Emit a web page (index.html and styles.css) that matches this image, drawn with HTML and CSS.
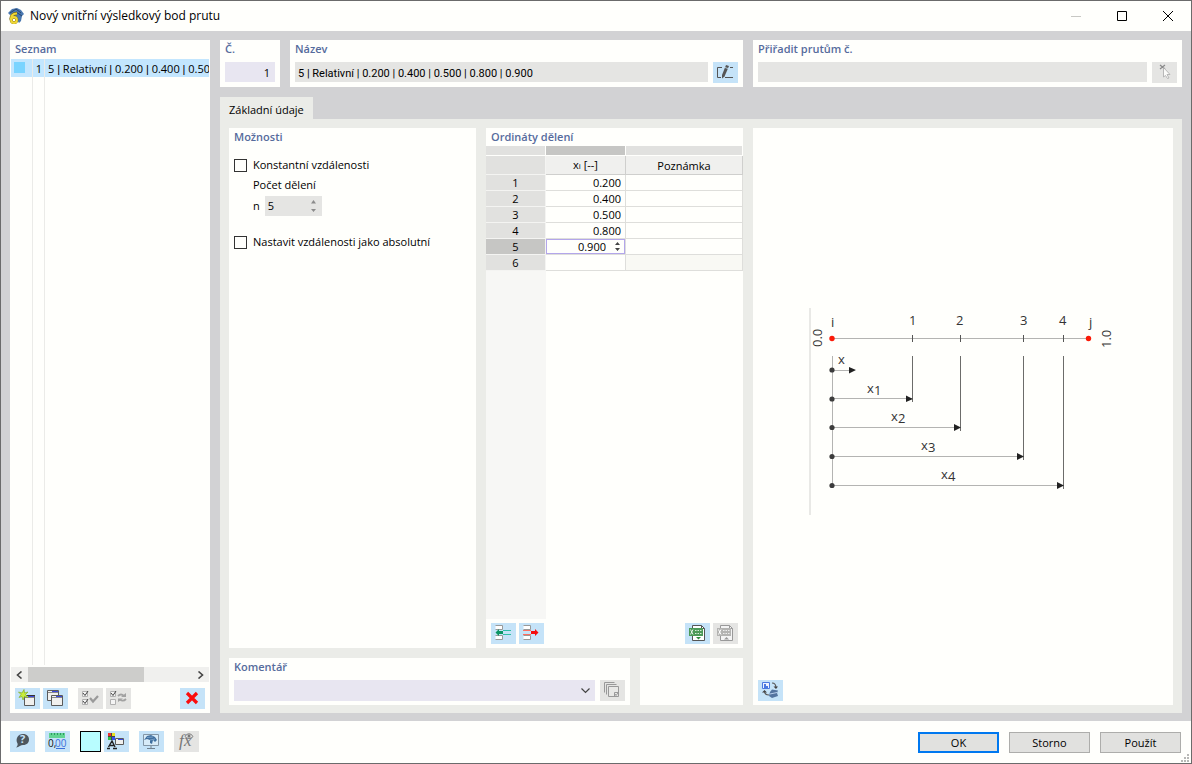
FILE: index.html
```html
<!DOCTYPE html>
<html lang="cs">
<head>
<meta charset="utf-8">
<title>Nový vnitřní výsledkový bod prutu</title>
<link rel="stylesheet" href="styles.css">
</head>
<body>
<div class="window">
  <header class="titlebar">
    <svg class="app-icon" width="16" height="16" viewBox="0 0 16 16" aria-hidden="true">
      <path d="M0 5 4 1 9 0 13 2 16 6 14 8 13 13 11 15 5 6 2 7Z" fill="#4a78b0"/>
      <path d="M2 5 8 1 13 5M8 4 14 8" fill="none" stroke="#27456b" stroke-width="1"/>
      <path d="M9 5.500C5 5.500 3 8 3 11.500" fill="none" stroke="#7d6c14" stroke-width="3.600"/>
      <circle cx="6" cy="12" r="2.800" fill="#fff" stroke="#7d6c14" stroke-width="3"/>
      <path d="M9 5.500C5 5.500 3 8 3 11.500" fill="none" stroke="#f0d836" stroke-width="2.200"/>
      <circle cx="6" cy="12" r="2.800" fill="none" stroke="#f0d836" stroke-width="2.200"/>
    </svg>
    <h1 class="title">Nový vnitřní výsledkový bod prutu</h1>
    <div class="caption-buttons">
      <button class="caption" disabled aria-label="Minimalizovat"><svg width="10" height="10" viewBox="0 0 10 10"><path d="M0 5.500H10" stroke="#c8c8c4" fill="none"/></svg></button>
      <button class="caption" aria-label="Maximalizovat"><svg width="10" height="10" viewBox="0 0 10 10"><path d="M.500.500H9.500V9.500H.500Z" stroke="#000" fill="none"/></svg></button>
      <button class="caption" aria-label="Zavřít"><svg width="10" height="10" viewBox="0 0 10 10"><path d="M0 0 10 10M10 0 0 10" stroke="#000" fill="none"/></svg></button>
    </div>
  </header>

  <main class="body">
    <aside class="panel sidebar">
      <h2 class="label">Seznam</h2>
      <div class="list">
        <div class="list-row selected">
          <span class="cell"><i class="swatch"></i></span><span class="cell num">1</span><span class="cell name">5 <span class="bar">|</span> Relativní <span class="bar">|</span> 0.200 <span class="bar">|</span> 0.400 <span class="bar">|</span> 0.50</span>
        </div>
        <div class="list-row filler"><span class="cell"></span><span class="cell"></span><span class="cell"></span></div>
      </div>
      <div class="scrollbar">
        <button class="arrow" aria-label="Doleva"><svg width="7" height="8" viewBox="0 0 7 8"><path d="M5.500 .500 1.500 4 5.500 7.500" fill="none" stroke="#444" stroke-width="1.600"/></svg></button>
        <div class="track"><div class="thumb"></div></div>
        <button class="arrow" aria-label="Doprava"><svg width="7" height="8" viewBox="0 0 7 8"><path d="M1.500 .500 5.500 4 1.500 7.500" fill="none" stroke="#444" stroke-width="1.600"/></svg></button>
      </div>
      <div class="tools list-tools">
        <button class="tool" aria-label="Nový"><svg width="25" height="21" viewBox="0 0 25 21"><path d="M9.500 7.500H19.500V17.500H9.500Z" fill="#f0f0ee" stroke="#5a5a5a"/><path d="M9 7H20V8H9Z" fill="#333"/><path d="M13 8H19V9H13Z" fill="#3c48e0"/><path d="M10 9.500H19" stroke="#888"/><path d="M9 1.500 9.500 5 13 4 10.500 6.500 13 9.500 9.500 8.500 8 12 7 8.500 4 9.500 6 6.500 3.500 4 7 5Z" fill="#c9ee3c" stroke="#7fae2a" stroke-width=".700"/></svg></button>
        <button class="tool" aria-label="Kopírovat"><svg width="25" height="21" viewBox="0 0 25 21"><path d="M4.500 2.500H15.500V12.500H4.500Z" fill="#f0f0ee" stroke="#5a5a5a"/><path d="M9 3H15V4H9Z" fill="#3c48e0"/><path d="M5 4.500H15" stroke="#888"/><path d="M8.500 7.500H19.500V17.500H8.500Z" fill="#f0f0ee" stroke="#5a5a5a"/><path d="M13 8H19V9H13Z" fill="#3c48e0"/><path d="M9 9.500H19" stroke="#888"/></svg></button>
        <button class="tool off second" disabled aria-label="Vybrat vše"><svg width="25" height="21" viewBox="0 0 25 21"><path d="M4.500 3.500H9.500V8.500H4.500ZM4.500 11.500H9.500V16.500H4.500Z" fill="#f4f4f4" stroke="#b0b0b0"/><path d="M5 5 7 7.500 10 3M5 13 7 15.500 10 11" fill="none" stroke="#444"/><path d="M12 10 15 13.500 20 8" fill="none" stroke="#9a9a9a" stroke-width="2.200"/></svg></button>
        <button class="tool off" disabled aria-label="Obrátit výběr"><svg width="25" height="21" viewBox="0 0 25 21"><path d="M4.500 3.500H9.500V8.500H4.500ZM4.500 11.500H9.500V16.500H4.500Z" fill="#f4f4f4" stroke="#b0b0b0"/><path d="M5 5 7 7.500 10 3" fill="none" stroke="#444"/><path d="M12 8C14 6 16 6 18 8M20 11C18 13 16 13 14 11.500" fill="none" stroke="#a2a2a2" stroke-width="1.800"/><path d="M15 9H20V5ZM17 10.500H12V14Z" fill="#a2a2a2"/></svg></button>
        <button class="tool last" aria-label="Odstranit"><svg width="25" height="21" viewBox="0 0 25 21"><path d="M7 5 17 15M17 5 7 15" fill="none" stroke="#fb0d0d" stroke-width="3.200"/></svg></button>
      </div>
    </aside>

    <div class="content">
      <div class="head">
        <section class="panel field">
          <label class="label" for="no">Č.</label>
          <input class="input lilac right" id="no" value="1">
        </section>
        <section class="panel field">
          <label class="label" for="name">Název</label>
          <div class="line">
            <input class="input entry-name" id="name" value="5 | Relativní | 0.200 | 0.400 | 0.500 | 0.800 | 0.900">
            <button class="tool" aria-label="Upravit název"><svg width="25" height="21" viewBox="0 0 25 21"><path d="M9 5.500H4.500V15.500H8M12 15.500H20M17 5.500H20" fill="none" stroke="#555"/><path d="M13 3 16 4 11.500 14.500 9 16.500 9 13Z" fill="#555"/><path d="M12 5.500 15 6.500" stroke="#c5e3f8" stroke-width=".800"/></svg></button>
          </div>
        </section>
        <section class="panel field">
          <label class="label" for="assign">Přiřadit prutům č.</label>
          <div class="line">
            <input class="input" id="assign">
            <button class="tool off" disabled aria-label="Vybrat"><svg width="25" height="21" viewBox="0 0 25 21"><path d="M8 3 13 7M13 3 8 7" stroke="#888" stroke-width="1.200"/><path d="M11.500 5.500 18 12.500 15 12.500 17 16 15.500 16.500 13.500 13.500 11.500 15Z" fill="#fbfbf9" stroke="#aaa" stroke-width=".800"/></svg></button>
          </div>
        </section>
      </div>

      <div class="tabs" role="tablist"><button class="tab" role="tab" aria-selected="true">Základní údaje</button></div>

      <div class="page">
        <div class="left">
          <div class="upper">
            <section class="panel options">
              <h2 class="label">Možnosti</h2>
              <label class="check"><input type="checkbox">Konstantní vzdálenosti</label>
              <div class="count">
                <label for="count">Počet dělení</label>
                <div class="count-line"><span>n</span><span class="spin"><input id="count" value="5" disabled><svg width="5" height="12" viewBox="0 0 5 12"><path d="M0 3.500 2.500 0 5 3.500ZM0 9 2.500 12 5 9Z" fill="#8c8c8c"/></svg></span></div>
              </div>
              <label class="check"><input type="checkbox">Nastavit vzdálenosti jako absolutní</label>
            </section>

            <section class="panel ordinates">
              <h2 class="label">Ordináty dělení</h2>
              <table class="grid">
                <colgroup><col class="c-no"><col class="c-x"><col></colgroup>
                <thead>
                  <tr class="strip"><td></td><td class="on"></td><td></td></tr>
                  <tr class="heads"><th></th><th scope="col">x<span class="sub">i</span> [--]</th><th scope="col">Poznámka</th></tr>
                </thead>
                <tbody>
                  <tr><th scope="row">1</th><td>0.200</td><td></td></tr>
                  <tr><th scope="row">2</th><td>0.400</td><td></td></tr>
                  <tr><th scope="row">3</th><td>0.500</td><td></td></tr>
                  <tr><th scope="row">4</th><td>0.800</td><td></td></tr>
                  <tr class="current"><th scope="row">5</th><td><span class="editor"><input value="0.900" aria-label="x 5"><svg width="5" height="9" viewBox="0 0 5 9"><path d="M0 3 2.500 0 5 3ZM0 6 2.500 9 5 6Z" fill="#444"/></svg></span></td><td></td></tr>
                  <tr><th scope="row">6</th><td></td><td class="locked"></td></tr>
                </tbody>
              </table>
              <div class="gutter"></div>
              <div class="tools">
                <button class="tool" aria-label="Vložit řádek"><svg width="25" height="21" viewBox="0 0 25 21"><path d="M4.500 2.500H11.500V6.500H4.500M4.500 12.500H11.500V16.500H4.500" fill="#fff" stroke="#999"/><path d="M12 7.500H20M12 11.500H20" stroke="#2fbfa5"/><path d="M4.500 9.500 8 6V8H12V11H8V13Z" fill="#0d9564"/></svg></button>
                <button class="tool" aria-label="Odstranit řádek"><svg width="25" height="21" viewBox="0 0 25 21"><path d="M4.500 2.500H11.500V6.500H4.500M4.500 12.500H11.500V16.500H4.500" fill="#fff" stroke="#999"/><path d="M4 7.500H12M4 11.500H12" stroke="#ff6f61"/><path d="M19.500 9.500 16 6V8H12V11H16V13Z" fill="#f60c0c"/></svg></button>
                <button class="tool last" aria-label="Export do tabulky"><svg width="25" height="21" viewBox="0 0 25 21"><path d="M7.500 2.500H16.500L19.500 5.500V17.500H7.500Z" fill="#fff" stroke="#555"/><path d="M16.500 2.500V5.500H19.500" fill="none" stroke="#555"/><path d="M4 5H18V13H4Z" fill="#4c9a58"/><path d="M5.500 6.500 8 11.500M8 6.500 5.500 11.500" stroke="#e4f3e6"/><path d="M10 7.500H17M10 10.500H17" stroke="#d7ecd9" stroke-dasharray="1.500 1"/><path d="M11 14H16L13.500 16.500Z" fill="#2f8a3c"/></svg></button>
                <button class="tool off" disabled aria-label="Import z tabulky"><svg width="25" height="21" viewBox="0 0 25 21"><path d="M7.500 2.500H16.500L19.500 5.500V17.500H7.500Z" fill="#f4f4f4" stroke="#999"/><path d="M16.500 2.500V5.500H19.500" fill="none" stroke="#999"/><path d="M4 5H18V13H4Z" fill="#b4b4b2"/><path d="M5.500 6.500 8 11.500M8 6.500 5.500 11.500" stroke="#fff"/><path d="M10 7.500H17M10 10.500H17" stroke="#eee" stroke-dasharray="1.500 1"/><path d="M11 16.500H16L13.500 14Z" fill="#999"/></svg></button>
              </div>
            </section>
          </div>

          <div class="lower">
            <section class="panel field">
              <label class="label" for="comment">Komentář</label>
              <div class="line">
                <span class="combo"><select class="input lilac" id="comment"><option></option></select><svg width="9" height="6" viewBox="0 0 9 6"><path d="M.500.500 4.500 4.500 8.500.500" fill="none" stroke="#444" stroke-width="1.200"/></svg></span>
                <button class="tool off" disabled aria-label="Knihovna komentářů"><svg width="25" height="21" viewBox="0 0 25 21"><path d="M4.500 12.500V2.500H14.500M6.500 14.500V4.500H16.500" fill="none" stroke="#999"/><path d="M8.500 6.500H18.500V16.500H8.500Z" fill="#e8e8e6" stroke="#999"/><path d="M14.500 16.500V12.500H18.500M15 14 16 15.500 18 13" fill="none" stroke="#999"/></svg></button>
              </div>
            </section>
            <section class="panel"></section>
          </div>
        </div>

        <section class="panel preview">
          <div class="canvas">
            <svg class="diagram" width="309" height="208" viewBox="0 0 309 208" role="img" aria-label="Schéma dělení prutu">
              <path class="edge" d="M1 1V208"/>
              <path class="thin" d="M23 31.500H279M23.500 49V179M23 63.500H42M23 91.500H103M23 120.500H150M23 149.500H214M23 178.500H254"/>
              <path class="tick" d="M103.500 28V35M151.500 28V35M214.500 28V35M254.500 28V35"/>
              <path class="drop" d="M103.500 49V95M151.500 49V124M214.500 49V153M254.500 49V182"/>
              <g class="red"><circle cx="23" cy="31.500" r="2.700"/><circle cx="279.500" cy="31.500" r="2.700"/></g>
              <g class="dark"><circle cx="23" cy="63" r="2.600"/><circle cx="23" cy="92" r="2.600"/><circle cx="23" cy="120.500" r="2.600"/><circle cx="23" cy="149.500" r="2.600"/><circle cx="23" cy="178.500" r="2.600"/></g>
              <path class="heads-fill" d="M40 60 47 63 40 66.500ZM97 88.500 104 92 97 95ZM145 117 152 120.500 145 124ZM208 146 215 149.500 208 153ZM248 175 255 178.500 248 182Z"/>
              <g class="txt">
                <text x="22" y="20">i</text><text x="100" y="18">1</text><text x="147" y="18">2</text><text x="211" y="18">3</text><text x="250" y="18">4</text><text x="280" y="20">j</text>
                <text transform="translate(13 40) rotate(-90)">0.0</text><text transform="translate(302 41) rotate(-90)">1.0</text>
                <text x="29" y="57">x</text><text x="58" y="86">x</text><text x="65" y="88">1</text><text x="82" y="114">x</text><text x="89" y="116">2</text><text x="112" y="143">x</text><text x="119" y="145">3</text><text x="132" y="172">x</text><text x="139" y="174">4</text>
              </g>
            </svg>
          </div>
          <div class="tools">
            <button class="tool" aria-label="Přepnout obrázek"><svg width="25" height="21" viewBox="0 0 25 21"><path d="M4.500 2.500H11.500V8.500H4.500Z" fill="#eef3ff" stroke="#4a7ae0"/><path d="M6 4H8V6H10V8H6Z" fill="#4a7ae0"/><path d="M14 3C17 3 18 5 18 8M11 15C8 15 6.500 14 6.500 11" fill="none" stroke="#555" stroke-width="1.200"/><path d="M15.500 6.500H20L18 9ZM4 12.500H9L6.500 10Z" fill="#444"/><path d="M12 12 14 9.500 20 10.500 19 13 20 16 14 18 11 16Z" fill="#54749f"/><path d="M12 14 19 12.500" stroke="#b9cfec"/></svg></button>
          </div>
        </section>
      </div>
    </div>
  </main>

  <footer class="footer">
    <div class="tools foot-tools">
      <button class="tool" aria-label="Nápověda"><svg width="25" height="21" viewBox="0 0 25 21"><path d="M13 3C17 3 19 5.500 19 8.500S17 14 13 14C11 14 9 16 6 16.500C7.500 15 8 13.500 7.500 12.500C5 8 8 3 13 3Z" fill="#4d565e"/><text class="q" x="10" y="12">?</text></svg></button>
      <button class="tool" aria-label="Jednotky"><svg width="25" height="21" viewBox="0 0 25 21"><path d="M4 2H20V7H4Z" fill="#62d493"/><path d="M6.500 2V4M9.500 2V4M12.500 2V4M15.500 2V4M18.500 2V4" stroke="#2c9a62"/><text class="zero" x="3" y="16">0,</text><text class="zero blue" x="10" y="16">00</text><path d="M11 17.500H20" stroke="#3b70d8"/></svg></button>
      <button class="color" aria-label="Barva"></button>
      <button class="tool tight" aria-label="Zobrazení"><svg width="25" height="21" viewBox="0 0 25 21"><path d="M4 2H11V9H4Z" fill="#444"/><path d="M4 2H7V5H4Z" fill="#f03030"/><path d="M8 2H11V5H8Z" fill="#e8e020"/><path d="M4 6H7V9H4Z" fill="#30c040"/><path d="M8 6H11V9H8Z" fill="#3450f0"/><path d="M4.500 16 8 10 11 16M5 14.500H10M3 17.500H6M9 17.500H13" fill="none" stroke="#222" stroke-width="1.400"/><path d="M11.500 7.500H19.500V13.500H11.500Z" fill="#f0f0ee" stroke="#5a5a5a"/><path d="M14 8H19V9H14Z" fill="#3c48e0"/></svg></button>
      <button class="tool" aria-label="Náhled"><svg width="25" height="21" viewBox="0 0 25 21"><path d="M4.500 3.500H19.500V14.500H4.500Z" fill="#d7ebf8" stroke="#8396a6"/><path d="M5 9 8 5 12 4 16 6 18 9 16 11 14 9 13 13 11 12 11 9 8 8Z" fill="#3f6f9f"/><path d="M8 6.500 14 6M11 9 16 8" stroke="#86acd0" stroke-width=".800"/><path d="M12 15V17M8 17.500H16" stroke="#70808e"/></svg></button>
      <button class="tool off" disabled aria-label="Vzorce"><svg width="25" height="21" viewBox="0 0 25 21"><text class="fx" x="5" y="15">f</text><text class="fx" x="10" y="15">x</text><path d="M11 5.500C13 2 17 2 19 5.500C17 8 13 8 11 5.500Z" fill="#e5e5e3" stroke="#777"/><circle cx="15" cy="5" r="1.500" fill="#777"/></svg></button>
    </div>
    <div class="dialog-buttons">
      <button class="btn primary">OK</button><button class="btn">Storno</button><button class="btn">Použít</button>
    </div>
    <svg class="grip" width="8" height="8" viewBox="0 0 8 8" aria-hidden="true"><path d="M6 0H8V2H6ZM3 3H5V5H3ZM6 3H8V5H6ZM0 6H2V8H0ZM3 6H5V8H3ZM6 6H8V8H6Z" fill="#b8b8b6"/></svg>
  </footer>
</div>
</body>
</html>
```
FILE: styles.css
```css
* { box-sizing: border-box; }

:root {
  --paper: #fffffc;
  --frame: #d2d2d4;
  --page: #ebece8;
  --field: #e5e5e3;
  --lilac: #e8e6f1;
  --blue: #c5e3f8;
  --heading: #566b9c;
}

body {
  margin: 0;
  font: 11px/16px "Open Sans", "Noto Sans", sans-serif;
  color: #000;
}

button, input, select { font: inherit; color: inherit; margin: 0; padding: 0; border: 0; border-radius: 0; }
h1, h2 { margin: 0; font-weight: 400; }
svg { display: block; flex: none; }

.window {
  display: flex;
  flex-direction: column;
  height: 100vh;
  min-height: 500px;
  border: 1px solid #6b6b6b;
  background: var(--paper);
}

.titlebar { display: flex; align-items: center; height: 30px; padding-left: 7px; gap: 6px; }
.title { flex: 1; font-size: 12px; }
.caption-buttons { display: flex; }
.caption { display: grid; place-items: center; width: 46px; height: 29px; background: none; }

.body { flex: 1; min-height: 0; display: flex; gap: 10px; padding: 9px 9px 8px; background: var(--frame); }
.panel { background: var(--paper); min-width: 0; }
.label { display: block; padding-left: 5px; line-height: 18px; font-size: 11px; font-weight: 600; color: var(--heading); }

.sidebar { width: 200px; display: flex; flex-direction: column; padding-bottom: 4px; }
.sidebar .label { height: 19px; }
.list { flex: 1; display: flex; flex-direction: column; margin: 0 1px; min-height: 0; }
.list-row { display: grid; grid-template-columns: 22px 12px 1fr; height: 18px; }
.list-row.filler { flex: 1; }
.list-row.selected { background: #c3e6fe; }
.cell { border-right: 1px solid #ebebe8; line-height: 20px; white-space: nowrap; overflow: hidden; }
.cell:last-child { border-right: 0; }
.num { text-align: right; padding-right: 2px; }
.name { padding-left: 3px; }
.bar { font-family: "Liberation Sans", sans-serif; }
.swatch { display: block; width: 11px; height: 11px; margin: 3px; background: #7ad4ff; }

.scrollbar { display: flex; height: 15px; margin: 2px 1px 6px; background: #f0f0ee; }
.arrow { display: grid; place-items: center; width: 17px; background: none; }
.track { flex: 1; }
.thumb { width: 71%; height: 100%; background: #cdcdcb; }

.tools { display: flex; gap: 3px; padding: 0 5px; }
.tool { flex: none; width: 25px; height: 21px; background: var(--blue); }
.tool.off { background: var(--field); }
.tool.second { margin-left: 7px; }
.tool.last { margin-left: auto; }

.content { flex: 1; min-width: 0; display: flex; flex-direction: column; }
.head { display: grid; grid-template-columns: 60px 453fr 429fr; gap: 10px; margin-bottom: 10px; }
.field { padding-bottom: 4px; }
.field .label { margin-bottom: 4px; }
.field > .input { display: block; width: calc(100% - 10px); margin: 0 5px; }
.line { display: flex; gap: 5px; padding: 0 5px; }
.input { flex: 1; min-width: 0; height: 20px; padding: 0 3px; background: var(--field); }
.entry-name { font-family: Roboto, sans-serif; padding-top: 2px; }
.head .field { height: 47px; }
.lilac { background: var(--lilac); }
.right { text-align: right; padding-right: 5px; }

.tabs { display: flex; }
.tab { height: 22px; padding: 3px 9px 0; background: var(--page); }

.page {
  flex: 1;
  min-height: 0;
  display: grid;
  grid-template-columns: 514fr 420fr;
  gap: 10px;
  padding: 9px 9px 8px;
  background: var(--page);
}
.left { display: flex; flex-direction: column; gap: 10px; min-width: 0; min-height: 0; }
.upper { flex: 1; display: grid; grid-template-columns: 247fr 257fr; gap: 10px; }
.lower { display: grid; grid-template-columns: 401fr 103fr; gap: 10px; }

.check { display: flex; align-items: center; gap: 6px; padding-left: 5px; }
.check input { appearance: none; width: 13px; height: 13px; border: 1px solid #333; background: var(--paper); }
.options .label { margin-bottom: 11px; }
.count { padding: 4px 0 18px 24px; line-height: 16px; }
.count label { display: block; }
.count-line { display: flex; align-items: center; gap: 5px; margin-top: 3px; }
.spin { display: flex; align-items: center; width: 57px; height: 20px; padding: 0 6px 0 3px; background: var(--field); }
.spin input { flex: 1; min-width: 0; background: none; }

.ordinates { display: flex; flex-direction: column; padding-bottom: 4px; }
.grid { width: 100%; table-layout: fixed; border-collapse: separate; border-spacing: 0; }
.c-no { width: 60px; }
.c-x { width: 80px; }
.grid th, .grid td { height: 16px; padding: 0; line-height: 15px; font-weight: 400; }
.grid .strip td { height: 10px; background: #e1e1df; border: 0 solid var(--paper); border-width: 0 1px 1px 0; }
.grid .strip .on { background: #c6c6c4; }
.grid .heads th { height: 19px; background: #f0f0ee; border: 0 solid #cfcfcd; border-width: 0 1px 1px 0; text-align: center; }
.grid .heads th:first-child { background: #e1e1df; border-color: #f4f4f2; }
.grid tbody th { background: #e1e1df; border-right: 1px solid #f4f4f2; border-bottom: 1px solid #f4f4f2; text-align: center; }
.grid tbody td { border: 0 solid #dededb; border-width: 0 1px 1px 0; text-align: right; padding-right: 4px; }
.grid tbody td:last-child { padding: 0; }
.grid .current th { background: #c6c6c4; }
.grid .current td { padding: 0; }
.grid .locked { background: #f9f9f4; }
.sub { font-size: 8px; }
.editor { display: flex; align-items: center; height: 15px; padding-right: 5px; gap: 9px; outline: 1px solid #b3a6ea; outline-offset: -1px; }
.editor input { flex: 1; min-width: 0; height: 15px; background: none; text-align: right; outline: 0; }
.gutter { flex: 1; width: 60px; margin-bottom: 4px; background: #f7f7f5; }

.combo { flex: 1; display: grid; align-items: center; }
.combo > * { grid-area: 1 / 1; }
.combo select { appearance: none; height: 21px; width: 100%; }
.combo svg { justify-self: end; margin-right: 5px; pointer-events: none; }

.preview { display: flex; flex-direction: column; padding-bottom: 4px; }
.canvas { flex: 1; display: grid; place-items: center; padding-top: 14px; }
.diagram path { fill: none; }
.diagram .edge { stroke: #e9e9e6; stroke-width: 2; }
.diagram .thin { stroke: #b4b4b2; }
.diagram .tick { stroke: #555; }
.diagram .drop { stroke: #6c6c6a; }
.diagram .red { fill: #fb1a08; }
.diagram .dark { fill: #3c3c3c; }
.diagram .heads-fill { fill: #222; }
.txt { font-size: 13px; fill: #333; }

.footer { display: flex; align-items: flex-start; height: 42px; padding-right: 2px; }
.foot-tools { flex: 1; gap: 10px; padding: 10px 9px 0; }
.tool.tight { margin-left: -7px; }
.color { width: 21px; height: 21px; border: 1px solid #000; background: #b8fdff; }
.dialog-buttons { display: flex; gap: 10px; padding-top: 11px; }
.btn { width: 81px; height: 21px; border: 1px solid #adadab; background: #e1e1df; }
.btn.primary { border: 2px solid #0078f0; }
.grip { align-self: flex-end; margin-bottom: 1px; }
.q { font-size: 11px; font-weight: 700; fill: #c5e3f8; }
.zero { font-size: 10px; font-weight: 400; fill: #111; }
.zero.blue { fill: #3b70d8; }
.fx { font: italic 17px "Liberation Serif", serif; fill: #777; }
```
